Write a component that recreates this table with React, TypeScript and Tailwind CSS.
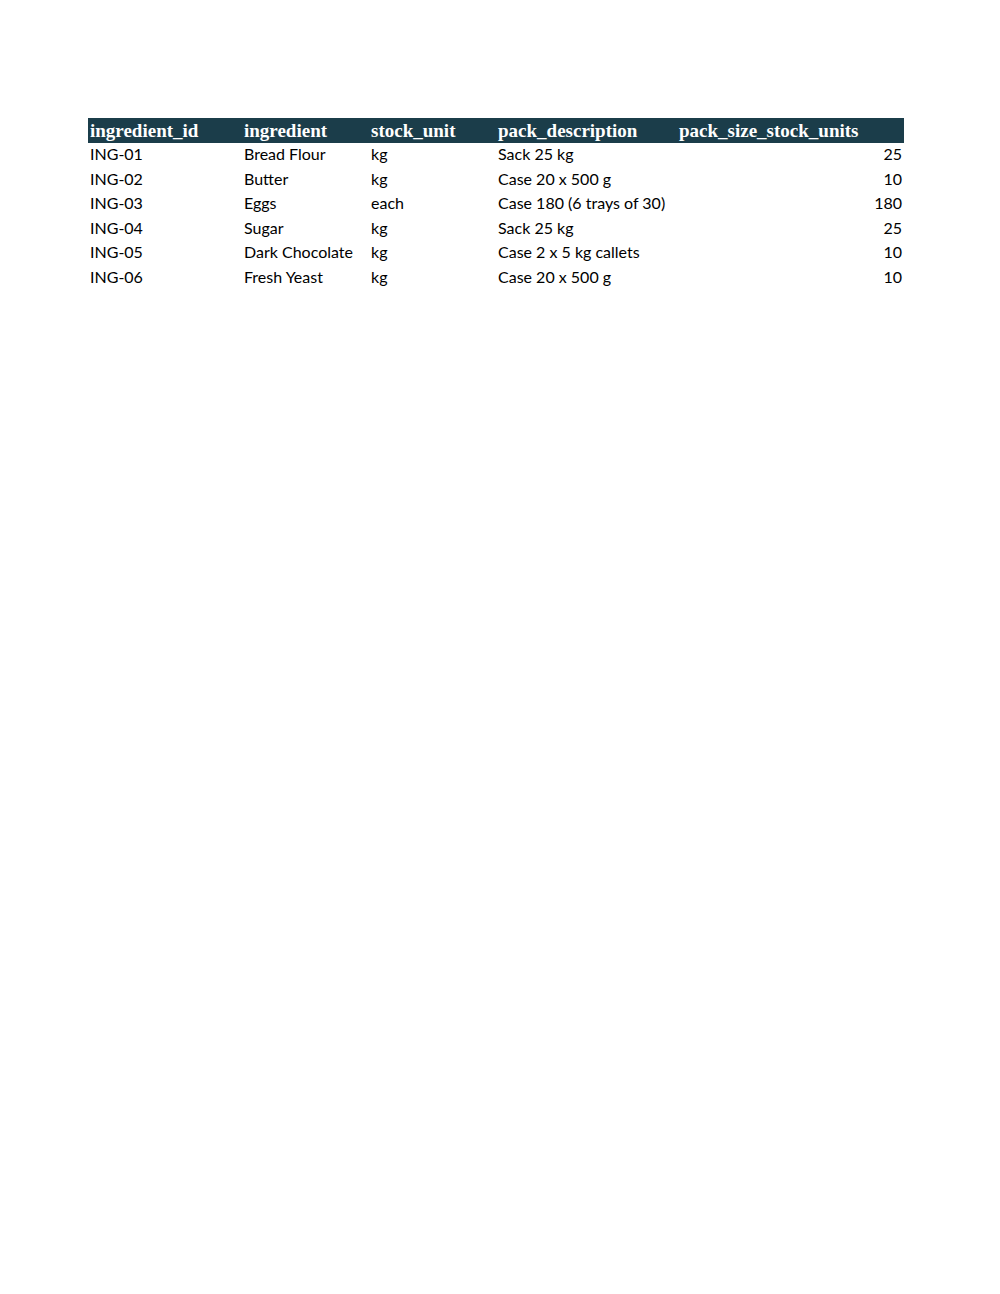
const rows = [
  { id: "ING-01", name: "Bread Flour", unit: "kg", pack: "Sack 25 kg", size: 25 },
  { id: "ING-02", name: "Butter", unit: "kg", pack: "Case 20 x 500 g", size: 10 },
  { id: "ING-03", name: "Eggs", unit: "each", pack: "Case 180 (6 trays of 30)", size: 180 },
  { id: "ING-04", name: "Sugar", unit: "kg", pack: "Sack 25 kg", size: 25 },
  { id: "ING-05", name: "Dark Chocolate", unit: "kg", pack: "Case 2 x 5 kg callets", size: 10 },
  { id: "ING-06", name: "Fresh Yeast", unit: "kg", pack: "Case 20 x 500 g", size: 10 },
]

export default function App() {
  return (
    <div className="w-[1000px] h-[1294px] bg-white pt-[118px] pl-[88px]">
      <table className="border-collapse table-fixed w-[816px]">
        <colgroup>
          <col className="w-[154px]" />
          <col className="w-[127px]" />
          <col className="w-[127px]" />
          <col className="w-[181px]" />
          <col className="w-[227px]" />
        </colgroup>
        <thead>
          <tr className="bg-[#1b3d4a] h-[25px] text-white text-[19px] font-bold font-['Liberation_Serif',serif]">
            <th className="text-left font-bold px-[2px] pb-[1px] leading-none">ingredient_id</th>
            <th className="text-left font-bold px-[2px] pb-[1px] leading-none">ingredient</th>
            <th className="text-left font-bold px-[2px] pb-[1px] leading-none">stock_unit</th>
            <th className="text-left font-bold px-[2px] pb-[1px] leading-none">pack_description</th>
            <th className="text-left font-bold px-[2px] pb-[1px] leading-none">pack_size_stock_units</th>
          </tr>
        </thead>
        <tbody className="text-[16px] text-black font-['Lato',sans-serif]">
          {rows.map((r) => (
            <tr key={r.id} className="h-[24.5px]">
              <td className="px-[2px] pb-[2px] leading-none">{r.id}</td>
              <td className="px-[2px] pb-[2px] leading-none whitespace-nowrap">{r.name}</td>
              <td className="px-[2px] pb-[2px] leading-none">{r.unit}</td>
              <td className="px-[2px] pb-[2px] leading-none whitespace-nowrap">{r.pack}</td>
              <td className="px-[2px] pb-[2px] leading-none text-right">{r.size}</td>
            </tr>
          ))}
        </tbody>
      </table>
    </div>
  )
}
